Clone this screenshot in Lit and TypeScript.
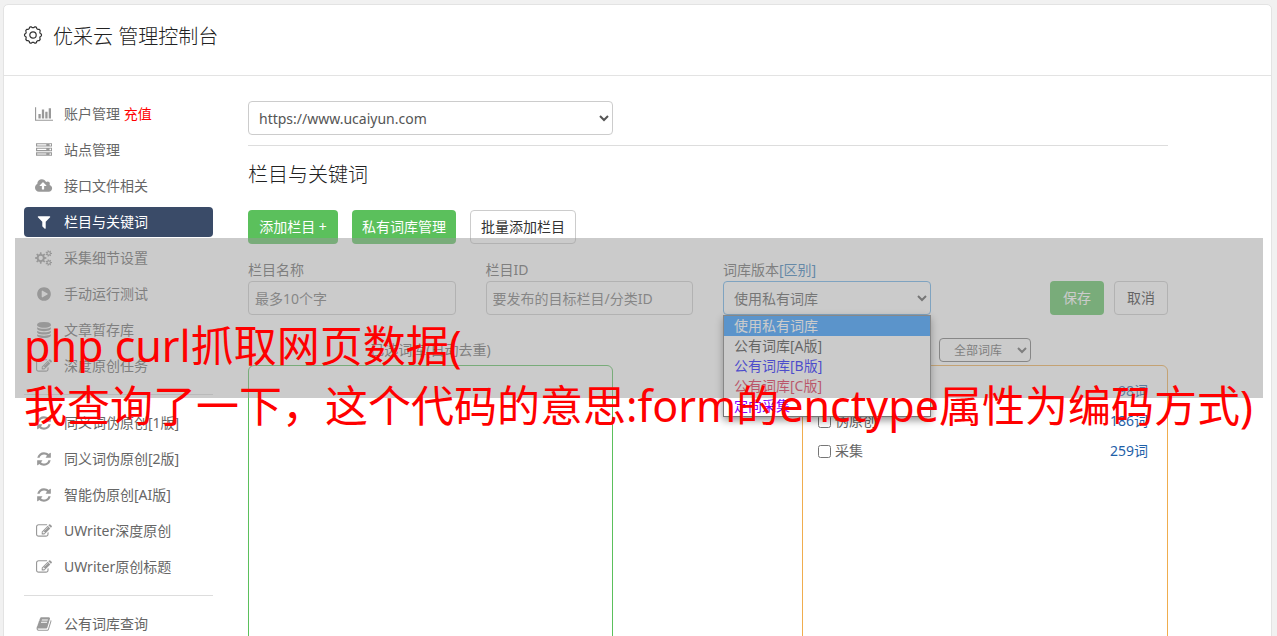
import { LitElement, html, css, svg, nothing } from "lit";
import { customElement, property, state } from "lit/decorators.js";
import { classMap } from "lit/directives/class-map.js";

/** Outline of a cog wheel: `teeth` teeth between the radii `inner` and `outer`. */
function cog(cx: number, cy: number, outer: number, inner: number, hole: number, teeth: number): string {
  const pts: string[] = [];
  const step = (Math.PI * 2) / teeth;
  for (let i = 0; i < teeth; i++) {
    const a = i * step;
    for (const [r, o] of [[inner, -0.3], [outer, -0.17], [outer, 0.17], [inner, 0.3]]) {
      const t = a + o * step;
      pts.push(`${(cx + r * Math.cos(t)).toFixed(1)} ${(cy + r * Math.sin(t)).toFixed(1)}`);
    }
  }
  return `M${pts.join("L")}zM${cx - hole} ${cy}a${hole} ${hole} 0 1 0 ${hole * 2} 0a${hole} ${hole} 0 1 0 ${-hole * 2} 0z`;
}

/** Wavy ring used by the outlined cog in the page title. */
function wave(cx: number, cy: number, radius: number, depth: number, lobes: number): string {
  const pts: string[] = [];
  for (let i = 0; i < 120; i++) {
    const t = (i / 120) * Math.PI * 2;
    const r = radius + depth * Math.tanh(2 * Math.cos(lobes * t + Math.PI));
    pts.push(`${(cx + r * Math.sin(t)).toFixed(2)} ${(cy - r * Math.cos(t)).toFixed(2)}`);
  }
  return `M${pts.join("L")}z`;
}

const unit = (y: number) =>
  `M0 ${y}h1792v384h-1792zM128 ${y + 128}v128h1024v-128zM1504 ${y + 192}a96 96 0 1 0 192 0a96 96 0 1 0 -192 0z`;

const ICONS: Record<string, { w: number; d: string }> = {
  chart: { w: 2048, d: "M640 896v512h-256v-512h256zm384-512v1024h-256v-1024h256zm1024 1152v128h-2048v-1536h128v1408h1920zm-640-896v768h-256v-768h256zm384-384v1152h-256v-1152h256z" },
  server: { w: 1792, d: unit(128) + unit(640) + unit(1152) },
  cloud: { w: 1920, d: "M1280 864q0-14-9-23l-352-352q-9-9-23-9t-23 9l-351 351q-10 12-10 24 0 14 9 23t23 9h224v352q0 13 9.5 22.5t22.5 9.5h192q13 0 22.5-9.5t9.5-22.5v-352h224q13 0 22.5-9.5t9.5-22.5zm640 288q0 159-112.5 271.5t-271.5 112.5h-1088q-185 0-316.5-131.5t-131.5-316.5q0-130 70-240t188-165q-2-30-2-43 0-212 150-362t362-150q156 0 285.5 87t188.5 231q71-62 166-62 106 0 181 75t75 181q0 76-41 138 130 31 213.5 135.5t83.5 238.5z" },
  filter: { w: 1792, d: "M1595 295q17 41-14 70l-493 493v742q0 42-39 59-13 5-25 5-27 0-45-19l-256-256q-19-19-19-45v-486l-493-493q-31-29-14-70 17-39 59-39h1280q42 0 59 39z" },
  cogs: { w: 1920, d: cog(640, 896, 640, 460, 240, 8) + cog(1536, 384, 370, 250, 128, 7) + cog(1536, 1408, 370, 250, 128, 7) },
  play: { w: 1792, d: "M896 128q209 0 385.5 103t279.5 279.5 103 385.5-103 385.5-279.5 279.5-385.5 103-385.5-103-279.5-279.5-103-385.5 103-385.5 279.5-279.5 385.5-103zm384 823q32-18 32-55t-32-55l-544-320q-31-19-64-1-32 19-32 56v640q0 37 32 56 16 8 32 8 17 0 32-9z" },
  database: { w: 1792, d: "M896 768q237 0 443-43t325-127v170q0 69-103 128t-280 93.5-385 34.5-385-34.5-280-93.5-103-128v-170q119 84 325 127t443 43zm0 768q237 0 443-43t325-127v170q0 69-103 128t-280 93.5-385 34.5-385-34.5-280-93.5-103-128v-170q119 84 325 127t443 43zm0-384q237 0 443-43t325-127v170q0 69-103 128t-280 93.5-385 34.5-385-34.5-280-93.5-103-128v-170q119 84 325 127t443 43zm0-1152q208 0 385 34.5t280 93.5 103 128v128q0 69-103 128t-280 93.5-385 34.5-385-34.5-280-93.5-103-128v-128q0-69 103-128t280-93.5 385-34.5z" },
  edit: { w: 1792, d: "M888 1184l116-116-152-152-116 116v56h96v96h56zm440-720q-16-16-33 1l-350 350q-17 17-1 33t33-1l350-350q17-17 1-33zm80 594v190q0 119-84.5 203.5t-203.5 84.5h-832q-119 0-203.5-84.5t-84.5-203.5v-832q0-119 84.5-203.5t203.5-84.5h832q63 0 117 25 15 7 18 23 3 17-9 29l-49 49q-14 14-32 8-23-6-45-6h-832q-66 0-113 47t-47 113v832q0 66 47 113t113 47h832q66 0 113-47t47-113v-126q0-13 9-22l64-64q15-15 35-7t20 29zm-96-738l288 288-672 672h-288v-288zm444 132l-92 92-288-288 92-92q28-28 68-28t68 28l152 152q28 28 28 68t-28 68z" },
  refresh: { w: 1792, d: "M1639 1056q0 5-1 7-64 268-268 434.5t-478 166.5q-146 0-282.5-55t-243.5-157l-129 129q-19 19-45 19t-45-19-19-45v-448q0-26 19-45t45-19h448q26 0 45 19t19 45-19 45l-137 137q71 66 161 102t187 36q134 0 250-65t186-179q11-17 53-117 8-23 30-23h192q13 0 22.5 9.5t9.5 22.5zm25-800v448q0 26-19 45t-45 19h-448q-26 0-45-19t-19-45 19-45l138-138q-148-137-349-137-134 0-250 65t-186 179q-11 17-53 117-8 23-30 23h-199q-13 0-22.5-9.5t-9.5-22.5v-7q65-268 270-434.5t480-166.5q146 0 284 55.5t245 156.5l130-129q19-19 45-19t45 19 19 45z" },
  book: { w: 1792, d: "M1703 478q40 57 18 129l-275 906q-19 64-76.5 107.5t-122.5 43.5h-923q-77 0-148.5-53.5t-99.5-131.5q-24-67-2-127 0-4 3-27t4-37q1-8-3-21.5t-3-19.5q2-11 8-21t16.5-23.5 16.5-23.5q23-38 45-91.5t30-91.5q3-10 .5-30t-.5-28q3-11 17-28t17-23q21-36 42-92t25-90q1-9-2.5-32t.5-28q4-13 22-30.5t22-22.5q19-26 42.5-84.5t27.5-96.5q1-8-3-25.5t-2-26.5q2-8 9-18t18-23 17-21q8-12 16.5-30.5t15-35 16-36 19.5-32 26.5-23.5 36-11.5 47.5 5.5l-1 3q38-9 51-9h761q74 0 114 56t18 130l-274 906q-36 119-71.5 153.5t-128.5 34.5h-869q-27 0-38 15-11 16-1 43 24 70 144 70h923q29 0 56-15.5t35-41.5l300-987q7-22 5-57 38 15 59 43zm-1064 2q-4 13 2 22.5t20 9.5h608q13 0 25.5-9.5t16.5-22.5l21-64q4-13-2-22.5t-20-9.5h-608q-13 0-25.5 9.5t-16.5 22.5zm-83 256q-4 13 2 22.5t20 9.5h608q13 0 25.5-9.5t16.5-22.5l21-64q4-13-2-22.5t-20-9.5h-608q-13 0-25.5 9.5t-16.5 22.5z" },
};

@customElement("nav-icon")
export class NavIcon extends LitElement {
  static styles = css`
    :host { display: flex; width: 20px; height: 16px; justify-content: center; }
    .glyph { display: block; height: 16px; fill: currentColor; fill-rule: evenodd; }
  `;

  @property() name = "chart";

  render() {
    const icon = ICONS[this.name];
    return html`<svg class="glyph" viewBox="0 0 ${icon.w} 1792" aria-hidden="true">${svg`<path d=${icon.d}></path>`}</svg>`;
  }
}

interface NavItem { icon: string; text: string; extra?: string; active?: boolean }

const NAV: NavItem[][] = [
  [
    { icon: "chart", text: "账户管理", extra: "充值" },
    { icon: "server", text: "站点管理" },
    { icon: "cloud", text: "接口文件相关" },
    { icon: "filter", text: "栏目与关键词", active: true },
    { icon: "cogs", text: "采集细节设置" },
    { icon: "play", text: "手动运行测试" },
    { icon: "database", text: "文章暂存库" },
    { icon: "edit", text: "深度原创任务" },
  ],
  [
    { icon: "refresh", text: "同义词伪原创[1版]" },
    { icon: "refresh", text: "同义词伪原创[2版]" },
    { icon: "refresh", text: "智能伪原创[AI版]" },
    { icon: "edit", text: "UWriter深度原创" },
    { icon: "edit", text: "UWriter原创标题" },
  ],
  [{ icon: "book", text: "公有词库查询" }],
];

const VERSIONS = [
  { text: "使用私有词库", tone: "picked" },
  { text: "公有词库[A版]", tone: "plain" },
  { text: "公有词库[B版]", tone: "blue" },
  { text: "公有词库[C版]", tone: "crimson" },
  { text: "定向采集", tone: "violet" },
];

const LIBRARIES = [
  { name: "优采云", count: 98 },
  { name: "伪原创", count: 186 },
  { name: "采集", count: 259 },
];

@customElement("app-root")
export class AppRoot extends LitElement {
  static styles = css`
    :host {
      display: block;
      position: relative;
      height: 100vh;
      overflow: hidden;
      box-sizing: border-box;
      padding: 4px 5px 0 3px;
      background: #f1f1f1;
      color: #666;
      font: 14px/20px "Noto Sans", "Noto Sans CJK SC", sans-serif;
    }
    *, *::before { box-sizing: border-box; }
    .card { min-height: 120vh; background: #fff; border: 1px solid #e3e3e3; border-radius: 5px; }
    .head { display: flex; align-items: flex-start; gap: 10px; height: 71px; padding: 17px 19px 0; border-bottom: 1px solid #e3e3e3; }
    .head-icon { width: 20px; height: 20px; margin-top: 3px; fill: none; stroke: #333; stroke-width: 1.2; }
    .title, .subtitle { margin: 0; font-size: 20px; line-height: 30px; font-weight: 300; color: #222; }
    .body { display: flex; gap: 35px; padding: 23px 20px 0; }
    .side { flex: none; width: 189px; }
    .group { display: flex; flex-direction: column; gap: 6px; margin: 0; padding: 0; list-style: none; }
    .group + .group { margin-top: 13px; padding-top: 13px; border-top: 1px solid #ddd; }
    .link { display: flex; align-items: center; gap: 10px; height: 30px; padding: 0 10px; border-radius: 4px; color: #666; text-decoration: none; }
    .link nav-icon { color: #999; }
    .link.active, .link.active nav-icon { color: #fff; }
    .link.active { background: #3a4b68; }
    .extra { color: #f00; }
    .main { flex: 1; min-width: 0; max-width: 920px; padding-top: 2px; }
    .field {
      display: block; width: 100%; height: 34px; padding: 0 6px; border: 1px solid #ccc; border-radius: 4px;
      background-color: #fff; color: #555; font: inherit;
    }
    .field::placeholder { color: #757575; opacity: 1; }
    .field.open { border-color: #66afe9; }
    .site { width: calc(50% - 95px); }
    .rule { margin: 10px 0 14px; border: 0; border-top: 1px solid #ddd; }
    .actions { display: flex; gap: 14px; margin: 20px 0 16px; }
    .btn { height: 34px; min-width: 54px; padding: 0 10px; border: 1px solid #ccc; border-radius: 4px; background: #fff; color: #333; font: inherit; white-space: nowrap; }
    .btn.go { border: 0; background: #5bc05c; color: #fff; }
    .actions .btn { min-width: 90px; }
    .row { display: grid; grid-template-columns: repeat(4, 1fr); gap: 30px; align-items: end; }
    .cell { position: relative; min-width: 0; }
    .label { display: block; height: 21px; }
    .help { color: #337ab7; text-decoration: none; }
    .cell.end { display: flex; justify-content: flex-end; gap: 10px; }
    .menu {
      position: absolute; z-index: 2; top: 100%; left: 0; right: 0; margin: 0; padding: 0; list-style: none;
      border: 1px solid #767676; background: #fff; box-shadow: 0 3px 8px rgba(0, 0, 0, 0.45);
    }
    .option { height: 20px; padding: 0 10px; line-height: 20px; color: #333; }
    .option.picked { background: #1e90ff; color: #fff; }
    .option.blue { color: #00f; }
    .option.crimson { color: #dc143c; }
    .option.violet { color: #8000ff; }
    .panels { display: grid; grid-template-columns: 365px 1fr 366px; grid-template-columns: minmax(0, 365fr) minmax(0, 189fr) minmax(0, 366fr); grid-template-rows: 24px 100vh; row-gap: 3px; margin-top: 23px; }
    .panel-title { align-self: center; text-align: center; }
    .panel-title.right, .panel.right { grid-column: 3; }
    .scope { display: block; width: 92px; height: 24px; margin: 0 auto; padding: 0 10px; border: 1px solid #767676; border-radius: 4px; background-color: #fff; color: #666; font: inherit; font-size: 12px; }
    .panel { width: 100%; margin: 0; padding: 10px 19px 10px 15px; border: 1px solid #5bc05c; border-radius: 6px; background: #fff; font: inherit; resize: none; }
    .panel.right { border-color: #f0ad4e; list-style: none; }
    .lib { display: flex; align-items: center; justify-content: space-between; height: 30px; }
    .pick { display: flex; align-items: center; gap: 4px; }
    .box { width: 13px; height: 13px; margin: 0; }
    .count { color: #1f5fa8; }
    .banner { position: absolute; z-index: 3; top: 238px; left: 15px; right: 14px; height: 160px; background: rgba(151, 151, 151, 0.5); pointer-events: none; }
    .slogan { margin: 0; padding: 78px 0 0 9px; color: #f00; font-size: 43px; line-height: 60px; white-space: nowrap; }
  `;

  @state() private menuOpen = true;

  private renderNav(item: NavItem) {
    return html`<li>
      <a class=${classMap({ link: true, active: !!item.active })} href="#">
        <nav-icon name=${item.icon}></nav-icon>
        <span>${item.text}${item.extra ? html` <span class="extra">${item.extra}</span>` : nothing}</span>
      </a>
    </li>`;
  }

  render() {
    return html`
      <div class="card">
        <header class="head">
          <svg class="head-icon" viewBox="0 0 20 20" aria-hidden="true">
            <path d=${wave(10, 10, 7.9, 0.6, 10)}></path>
            <circle cx="10" cy="10" r="3.2"></circle>
          </svg>
          <h1 class="title">优采云 管理控制台</h1>
        </header>
        <div class="body">
          <nav class="side">
            ${NAV.map((group) => html`<ul class="group">${group.map((item) => this.renderNav(item))}</ul>`)}
          </nav>
          <main class="main">
            <select class="field site" aria-label="站点"><option>https://www.ucaiyun.com</option></select>
            <hr class="rule" />
            <h2 class="subtitle">栏目与关键词</h2>
            <div class="actions">
              <button class="btn go" type="button">添加栏目 +</button>
              <button class="btn go" type="button">私有词库管理</button>
              <button class="btn" type="button">批量添加栏目</button>
            </div>
            <form class="row">
              <div class="cell">
                <label class="label" for="name">栏目名称</label>
                <input class="field" id="name" placeholder="最多10个字" />
              </div>
              <div class="cell">
                <label class="label" for="cid">栏目ID</label>
                <input class="field" id="cid" placeholder="要发布的目标栏目/分类ID" />
              </div>
              <div class="cell">
                <label class="label" for="version">词库版本<a class="help" href="#">[区别]</a></label>
                <select class=${classMap({ field: true, open: this.menuOpen })} id="version"><option>使用私有词库</option></select>
                ${this.menuOpen
                  ? html`<ul class="menu" role="listbox">
                      ${VERSIONS.map((v) => html`<li class="option ${v.tone}" role="option" aria-selected=${v.tone === "picked"}>${v.text}</li>`)}
                    </ul>`
                  : nothing}
              </div>
              <div class="cell end">
                <button class="btn go" type="button">保存</button>
                <button class="btn" type="button">取消</button>
              </div>
            </form>
            <div class="panels">
              <label class="panel-title" for="chosen">已选词库(自动去重)</label>
              <div class="panel-title right">
                <select class="scope" aria-label="词库范围"><option>全部词库</option></select>
              </div>
              <textarea class="panel" id="chosen"></textarea>
              <ul class="panel right">
                ${LIBRARIES.map((lib) => html`<li class="lib">
                  <label class="pick"><input class="box" type="checkbox" />${lib.name}</label>
                  <span class="count">${lib.count}词</span>
                </li>`)}
              </ul>
            </div>
          </main>
        </div>
      </div>
      <div class="banner">
        <p class="slogan">php curl抓取网页数据(<br />我查询了一下，这个代码的意思:form的enctype属性为编码方式)</p>
      </div>
    `;
  }
}
